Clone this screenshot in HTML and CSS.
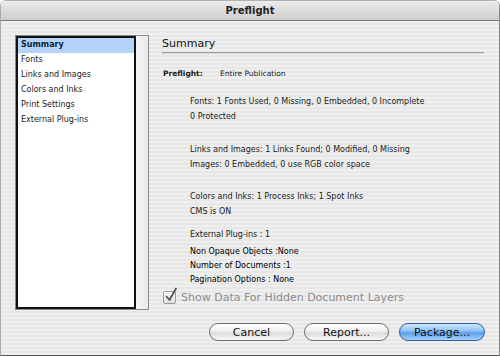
FILE: index.html
```html
<!DOCTYPE html>
<html>
<head>
<meta charset="utf-8">
<link rel="stylesheet" href="styles.css">
</head>
<body>
<div class="window">
  <div class="titlebar">Preflight</div>
  <div class="content">
    <div class="main">
      <div class="listbox">
        <ul class="list">
          <li class="item selected">Summary</li>
          <li class="item">Fonts</li>
          <li class="item">Links and Images</li>
          <li class="item">Colors and Inks</li>
          <li class="item">Print Settings</li>
          <li class="item">External Plug-ins</li>
        </ul>
        <div class="scroll"></div>
      </div>
      <div class="panel">
        <h1 class="heading">Summary</h1>
        <div class="pf-row"><span class="pf-label">Preflight:</span><span>Entire Publication</span></div>
        <div class="details">
          <p class="grp">Fonts: 1 Fonts Used, 0 Missing, 0 Embedded, 0 Incomplete<br>0 Protected</p>
          <p class="grp g2">Links and Images: 1 Links Found; 0 Modified, 0 Missing<br>Images: 0 Embedded, 0 use RGB color space</p>
          <p class="grp g3">Colors and Inks: 1 Process Inks; 1 Spot Inks<br>CMS is ON</p>
          <p class="grp g4">External Plug-ins : 1</p>
          <p class="grp g5">Non Opaque Objects :None<br>Number of Documents :1<br>Pagination Options : None</p>
        </div>
        <div class="check">
          <span class="box"><svg width="14" height="16" viewBox="0 0 14 16"><path d="M2.5 9.5 L5.5 13 L12 1.5" fill="none" stroke="#555" stroke-width="1.8" stroke-linecap="round" stroke-linejoin="round"/></svg></span>
          <span class="check-label">Show Data For Hidden Document Layers</span>
        </div>
      </div>
    </div>
    <div class="buttons">
      <button class="btn">Cancel</button>
      <button class="btn">Report...</button>
      <button class="btn primary">Package...</button>
    </div>
  </div>
</div>
</body>
</html>
```
FILE: styles.css
```css
html, body {
  margin: 0;
  padding: 0;
  background: #ffffff;
}
body {
  width: 500px;
  height: 357px;
  overflow: hidden;
  font-family: "DejaVu Sans", sans-serif;
  color: #1a1a1a;
}
.window {
  width: 500px;
  height: 356px;
  box-sizing: border-box;
  border-left: 1px solid #a8a8a8;
  border-right: 1px solid #8a8a8a;
  border-bottom: 1px solid #555;
  border-radius: 6px 6px 0 0;
  overflow: hidden;
  display: flex;
  flex-direction: column;
}
.titlebar {
  height: 21px;
  flex: none;
  border-top: 1px solid #b0b0b0;
  box-sizing: border-box;
  background: linear-gradient(#ececec, #dcdcdc 50%, #cfcfcf);
  border-bottom: 1px solid #7a7a7a;
  text-align: center;
  font-weight: bold;
  font-size: 10px;
  line-height: 19px;
  color: #222;
}
.content {
  flex: 1;
  background: repeating-linear-gradient(to bottom, #efefef 0 2px, #e7e7e7 2px 4px);
  display: flex;
  flex-direction: column;
  padding: 14px 14px 0 14px;
}
.main {
  display: flex;
  height: 275px;
}
.listbox {
  width: 132px;
  height: 273px;
  border: 1px solid #8a8a8a;
  display: flex;
  background: #f3f3f3;
}
.list {
  margin: 0;
  padding: 0;
  list-style: none;
  width: 120px;
  border: 2px solid #111;
  background: #fff;
  box-sizing: border-box;
  height: 273px;
}
.item {
  height: 15px;
  line-height: 14px;
  font-size: 8px;
  padding-left: 3px;
  color: #222;
}
.selected {
  background: #b5d3f8;
  font-weight: bold;
  color: #0d1f3a;
}
.scroll {
  flex: 1;
  background: linear-gradient(to right, #f6f6f6, #e9e9e9);
}
.panel {
  margin-left: 13px;
  width: 322px;
  display: flex;
  flex-direction: column;
}
.heading {
  margin: 2px 0 0 0;
  font-weight: normal;
  font-size: 11px;
  line-height: 14px;
  padding-bottom: 1px;
  border-bottom: 1px solid #9c9c9c;
  box-shadow: 0 1px 0 #d8d8d8;
  color: #111;
}
.pf-row {
  margin-top: 14px;
  font-size: 7.5px;
  line-height: 14px;
  display: flex;
  padding-left: 1px;
}
.pf-label {
  font-weight: bold;
  width: 57px;
}
.details {
  margin-top: 13px;
  padding-left: 28px;
  font-size: 8px;
  line-height: 15px;
}
.grp {
  margin: 0;
}
.g2 { margin-top: 18px; }
.g3 { margin-top: 17px; }
.g4 { margin-top: 8px; }
.g5 { margin-top: 3px; line-height: 14px; color: #000; }
.check {
  margin-top: 2px;
  display: flex;
  align-items: center;
  height: 16px;
  padding-left: 1px;
}
.box {
  width: 11px;
  height: 11px;
  border: 1px solid #9a9a9a;
  border-radius: 2px;
  background: linear-gradient(#fbfbfb, #e2e2e2);
  position: relative;
  margin-right: 5px;
}
.box svg {
  position: absolute;
  left: 0px;
  top: -5px;
}
.check-label {
  font-size: 11px;
  color: #8c8c8c;
}
.buttons {
  margin-top: 13px;
  display: flex;
  justify-content: flex-end;
  gap: 10px;
}
.btn {
  width: 85px;
  height: 18px;
  border-radius: 9px;
  border: 1px solid #6e6e6e;
  background: linear-gradient(#ffffff, #f0f0f0 45%, #dcdcdc 55%, #f6f6f6);
  font-family: "DejaVu Sans", sans-serif;
  font-size: 11px;
  line-height: 15px;
  padding: 0;
  color: #111;
}
.primary {
  width: 86px;
  border-color: #2f5e9e;
  background: linear-gradient(#d2e7fd, #8cc0f3 45%, #5b9ee9 55%, #a8d4fb);
}
```
